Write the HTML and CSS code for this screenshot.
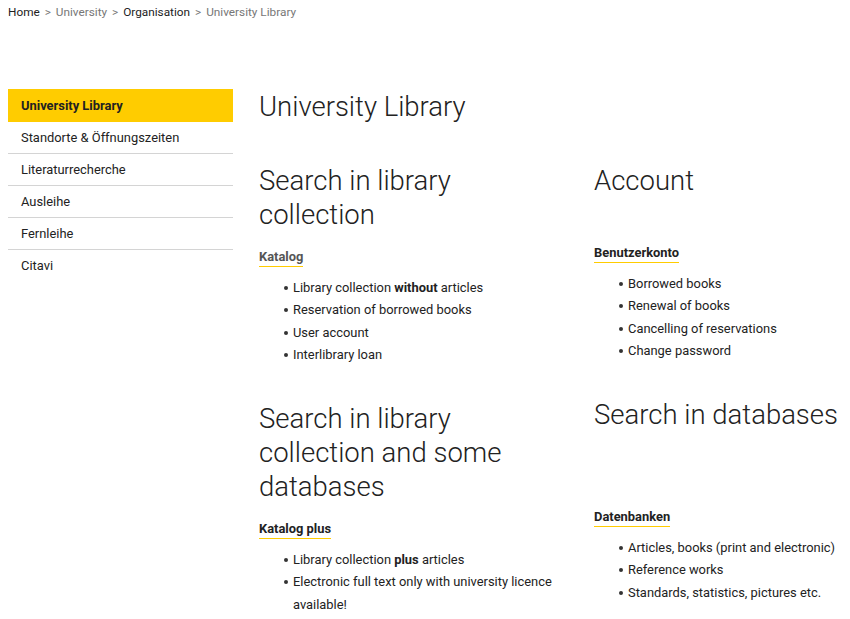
FILE: index.html
```html
<!DOCTYPE html>
<html lang="en">
<head>
    <meta charset="UTF-8">
    <meta name="viewport" content="width=device-width, initial-scale=1.0">
    <title>University Library</title>
    <link rel="stylesheet" href="styles.css">
</head>
<body>
    <nav class="breadcrumb">
        <a href="#" class="crumb crumb-dark">Home</a>
        <span class="sep">&gt;</span>
        <a href="#" class="crumb">University</a>
        <span class="sep">&gt;</span>
        <a href="#" class="crumb crumb-dark">Organisation</a>
        <span class="sep">&gt;</span>
        <span class="crumb">University Library</span>
    </nav>

    <div class="page">
        <aside class="sidebar">
            <a href="#" class="side-link active">University Library</a>
            <a href="#" class="side-link">Standorte &amp; Öffnungszeiten</a>
            <a href="#" class="side-link">Literaturrecherche</a>
            <a href="#" class="side-link">Ausleihe</a>
            <a href="#" class="side-link">Fernleihe</a>
            <a href="#" class="side-link last">Citavi</a>
        </aside>

        <main class="content">
            <h1>University Library</h1>

            <div class="columns">
                <div class="column">
                    <section class="block">
                        <h2>Search in library collection</h2>
                        <a href="#" class="block-link visited">Katalog</a>
                        <ul>
                            <li>Library collection <strong>without</strong> articles</li>
                            <li>Reservation of borrowed books</li>
                            <li>User account</li>
                            <li>Interlibrary loan</li>
                        </ul>
                    </section>
                    <section class="block">
                        <h2>Search in library collection and some databases</h2>
                        <a href="#" class="block-link">Katalog plus</a>
                        <ul>
                            <li>Library collection <strong>plus</strong> articles</li>
                            <li>Electronic full text only with university licence available!</li>
                        </ul>
                    </section>
                </div>

                <div class="column">
                    <section class="block">
                        <h2 class="two-line">Account</h2>
                        <a href="#" class="block-link">Benutzerkonto</a>
                        <ul>
                            <li>Borrowed books</li>
                            <li>Renewal of books</li>
                            <li>Cancelling of reservations</li>
                            <li>Change password</li>
                        </ul>
                    </section>
                    <section class="block">
                        <h2 class="three-line">Search in databases</h2>
                        <a href="#" class="block-link">Datenbanken</a>
                        <ul>
                            <li>Articles, books (print and electronic)</li>
                            <li>Reference works</li>
                            <li>Standards, statistics, pictures etc.</li>
                        </ul>
                    </section>
                </div>
            </div>
        </main>
    </div>
</body>
</html>
```

FILE: styles.css
```css
body {
    font-family: Roboto, "Liberation Sans", Arial, sans-serif;
    margin: 0;
    padding: 0;
    background-color: #fff;
    color: #222;
    overflow: hidden;
}
a {
    text-decoration: none;
    color: inherit;
}
.breadcrumb {
    padding: 4px 8px 0;
    font-size: 11.8px;
    line-height: 16px;
    color: #777;
}
.breadcrumb .sep {
    margin: 0 2px;
    color: #777;
}
.crumb-dark {
    color: #222;
}
.page {
    display: flex;
    padding: 69px 0 0 8px;
}
.sidebar {
    width: 225px;
    flex-shrink: 0;
    display: flex;
    flex-direction: column;
}
.side-link {
    display: block;
    padding: 0 13px;
    height: 31px;
    line-height: 32px;
    font-size: 12.9px;
    color: #222;
    border-bottom: 1px solid #d4d4d4;
}
.side-link.active {
    background: #ffcc00;
    font-weight: 700;
    height: 33px;
    line-height: 33px;
    border-bottom: none;
}
.side-link.last {
    border-bottom: none;
}
.content {
    padding-left: 26px;
    flex: 1;
    min-width: 0;
}
h1, h2 {
    font-weight: 300;
    font-size: 27.5px;
    line-height: 34px;
    margin: 0;
    color: #222;
}
h1 {
    margin-top: 1px;
    margin-bottom: 40px;
}
.columns {
    display: grid;
    grid-template-columns: 310px 1fr;
    column-gap: 25px;
}
.block {
    margin-bottom: 36px;
}
.block h2 {
    margin-bottom: 14px;
}
h2.two-line {
    min-height: 64px;
}
h2.three-line {
    min-height: 94px;
}
.block-link {
    display: inline-block;
    font-size: 12.9px;
    font-weight: 700;
    line-height: 18px;
    color: #222;
    border-bottom: 1.5px solid #ffcc00;
    margin-bottom: 10px;
}
.block-link.visited {
    color: #555;
}
.block ul {
    margin: 0;
    padding-left: 34px;
    list-style: none;
    font-size: 12.9px;
    line-height: 22.3px;
    color: #222;
}
.block li {
    position: relative;
}
.block li::before {
    content: "";
    position: absolute;
    left: -9px;
    top: 9px;
    width: 4px;
    height: 4px;
    border-radius: 50%;
    background: #333;
}
.block strong {
    font-weight: 700;
}
```
